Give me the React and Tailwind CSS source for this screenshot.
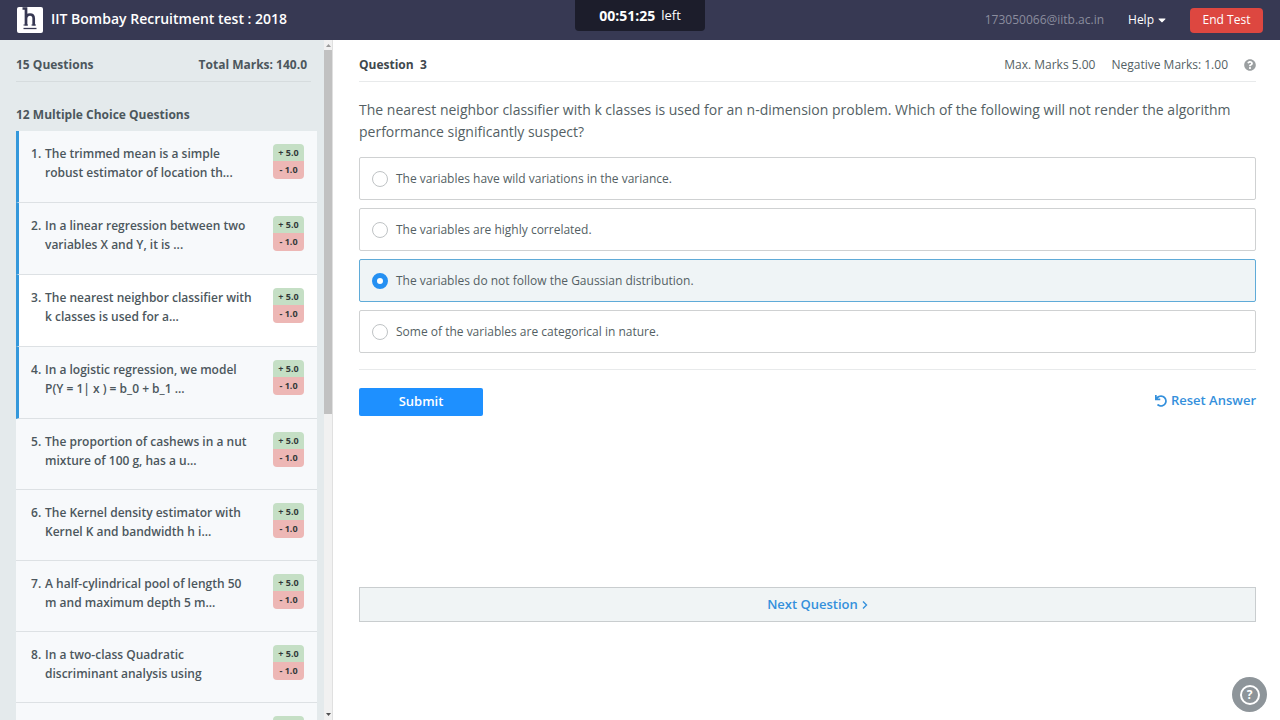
import { FaCaretDown, FaQuestionCircle, FaUndo } from "react-icons/fa";

const questions = [
  { lines: ["The trimmed mean is a simple", "robust estimator of location th..."], attempted: true },
  { lines: ["In a linear regression between two", "variables X and Y, it is ..."], attempted: true },
  { lines: ["The nearest neighbor classifier with", "k classes is used for a..."], attempted: true, current: true },
  { lines: ["In a logistic regression, we model", "P(Y = 1| x ) = b_0 + b_1 ..."], attempted: true },
  { lines: ["The proportion of cashews in a nut", "mixture of 100 g, has a u..."] },
  { lines: ["The Kernel density estimator with", "Kernel K and bandwidth h i..."] },
  { lines: ["A half-cylindrical pool of length 50", "m and maximum depth 5 m..."] },
  { lines: ["In a two-class Quadratic", "discriminant analysis using"] },
];

const options = [
  "The variables have wild variations in the variance.",
  "The variables are highly correlated.",
  "The variables do not follow the Gaussian distribution.",
  "Some of the variables are categorical in nature.",
];

function Logo() {
  return (
    <svg viewBox="0 0 26 26" className="size-[26px] shrink-0" aria-hidden="true">
      <rect width="26" height="26" rx="2" fill="#fff" />
      <g fill="none" stroke="#363852">
        <path d="M5.500 1.500H9v17M9 11.500C9.300 9 10.800 7.500 13 7.500c2.600 0 3.700 1.500 3.700 4v7" strokeWidth="2.700" />
        <path d="M6.500 18h4.500M14.500 18H19" strokeWidth="1" />
        <path d="M6.500 21.500h13" strokeWidth="1.300" />
      </g>
    </svg>
  );
}

function Header() {
  return (
    <header className="grid h-10 shrink-0 grid-cols-[1fr_auto_1fr] items-start bg-[#373953] text-white">
      <div className="flex h-10 items-center gap-2 pl-[17px]">
        <Logo />
        <h1 className="pb-0.5 text-sm leading-5 font-semibold whitespace-nowrap">IIT Bombay Recruitment test : 2018</h1>
      </div>
      <div className="flex h-[31px] w-[130px] items-center justify-center gap-1.5 rounded-b-sm bg-[#1c1d2b] text-[13px] whitespace-nowrap">
        <strong className="text-sm font-bold">00:51:25</strong>
        <span>left</span>
      </div>
      <div className="flex h-10 items-center justify-end pr-[17px] text-xs">
        <span className="text-[#8b8d9e]">173050066@iitb.ac.in</span>
        <button className="ml-6 flex items-center gap-1">
          Help <FaCaretDown className="h-3 w-2" />
        </button>
        <button className="ml-6 h-[25px] w-[73px] rounded-sm bg-[#dd4740]">End Test</button>
      </div>
    </header>
  );
}

function QuestionRow({ number, question }) {
  return (
    <li
      className={`flex justify-between border-b border-b-[#dde1e4] pt-[13px] pr-[13px] ${
        question.attempted ? "h-[72px] border-l-3 border-l-[#3498db] pl-3" : "h-[71px] pl-[15px]"
      } ${question.current ? "bg-white" : "bg-[#f7f9fb]"}`}
    >
      <a href="#question" className="flex text-xs leading-[19px] font-semibold whitespace-nowrap text-[#4c575d]">
        <span className="w-[14px]">{number}.</span>
        <span>
          {question.lines[0]}
          <br />
          {question.lines[1]}
        </span>
      </a>
      <div className="h-[35px] w-[31px] shrink-0 overflow-hidden rounded-sm text-center text-[9px] leading-[17px] font-bold text-[#333a3a]">
        <div className="h-[17px] bg-[#c5dfc5]">+ 5.0</div>
        <div className="h-[18px] bg-[#edb7b5]">- 1.0</div>
      </div>
    </li>
  );
}

function Sidebar() {
  return (
    <aside className="flex w-[333px] shrink-0 overflow-hidden bg-[#e4eaec] text-[#4c575d]">
      <div className="min-w-0 flex-1 pr-[7px] pl-4">
        <div className="mr-[6px] flex h-[42px] items-center justify-between border-b border-[#d6dcde] pt-2 pr-1 text-xs font-bold">
          <span>15 Questions</span>
          <span>Total Marks: 140.0</span>
        </div>
        <h2 className="flex h-[49px] items-end pb-1.5 text-xs leading-5 font-bold">12 Multiple Choice Questions</h2>
        <ol>
          {questions.map((question, i) => (
            <QuestionRow key={i} number={i + 1} question={question} />
          ))}
          <li className="flex h-[71px] justify-end bg-[#f7f9fb] pt-[13px] pr-[13px]">
            <div className="h-[17px] w-[31px] rounded-t-sm bg-[#c5dfc5]" />
          </li>
        </ol>
      </div>
      <div className="flex w-[9px] shrink-0 flex-col items-center border-r border-[#e0e0e0] bg-[#f1f1f1]" aria-hidden="true">
        <svg viewBox="0 0 9 10" className="h-[10px] w-[9px] shrink-0">
          <path d="M2 7 4.500 4 7 7z" fill="#999" />
        </svg>
        <div className="h-[364px] w-full bg-[#c1c1c1]" />
        <svg viewBox="0 0 9 10" className="mt-auto h-[10px] w-[9px] shrink-0">
          <path d="M2 3 4.500 6 7 3z" fill="#505050" />
        </svg>
      </div>
    </aside>
  );
}

function Option({ label, checked }) {
  return (
    <label
      className={`flex h-[43px] items-center gap-2 rounded-xs border pl-3 text-xs ${
        checked ? "border-[#5fabd8] bg-[#eff4f6]" : "border-[#cfd1d2] bg-white"
      }`}
    >
      <input
        type="radio"
        name="answer"
        defaultChecked={checked}
        className="size-4 shrink-0 appearance-none rounded-full border border-[#bfc3c5] bg-white checked:border-5 checked:border-[#2590f2]"
      />
      {label}
    </label>
  );
}

export default function App() {
  return (
    <div className="flex h-screen flex-col overflow-hidden bg-white font-['Open_Sans',sans-serif] text-[#545f64]">
      <Header />
      <div className="flex min-h-0 flex-1">
        <Sidebar />
        <main className="min-w-0 flex-1 pr-6 pl-[26px]">
          <div className="flex h-[42px] items-center border-b border-[#e8eaeb] pt-2 text-xs">
            <h2 className="mr-auto font-bold text-[#3f484d]">Question&nbsp; 3</h2>
            <span>Max. Marks 5.00</span>
            <span className="ml-4">Negative Marks: 1.00</span>
            <FaQuestionCircle className="ml-4 size-3 text-[#9b9fa1]" />
          </div>
          <p className="mt-[17px] text-sm leading-[22px]">
            The nearest neighbor classifier with k classes is used for an n-dimension problem. Which of the following will not render the algorithm performance significantly suspect?
          </p>
          <div className="mt-[14px] flex flex-col gap-2">
            {options.map((label, i) => (
              <Option key={label} label={label} checked={i === 2} />
            ))}
          </div>
          <div className="mt-4 flex items-start justify-between border-t border-[#e8eaeb] pt-[18px]">
            <button className="h-7 w-[124px] rounded-xs bg-[#1e90ff] text-[13px] font-semibold text-white">Submit</button>
            <button className="flex h-[26px] items-center gap-1 text-[13px] font-semibold text-[#3490dc]">
              <FaUndo className="size-3" />
              Reset Answer
            </button>
          </div>
          <button className="mt-[171px] flex h-[35px] w-full items-center justify-center gap-1 border border-[#c9cdcf] bg-[#f0f4f5] pl-5 text-[13px] font-semibold text-[#3490dc]">
            Next Question
            <svg viewBox="0 0 6 10" className="h-[10px] w-[6px]" fill="none" stroke="currentColor" strokeWidth="1.400" aria-hidden="true">
              <path d="M1 1.500 4.500 5 1 8.500" />
            </svg>
          </button>
        </main>
      </div>
      <button aria-label="Help" className="fixed right-[13px] bottom-2 flex size-[35px] items-center justify-center rounded-full bg-[#8e959a]">
        <span className="flex size-5 items-center justify-center rounded-full border-2 border-white text-xs leading-none font-bold text-white">?</span>
      </button>
    </div>
  );
}
